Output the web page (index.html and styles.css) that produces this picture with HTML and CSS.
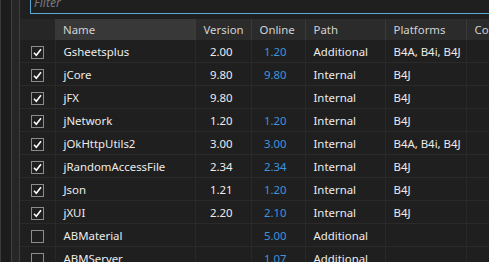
FILE: index.html
```html
<!DOCTYPE html>
<html lang="en">
<head>
    <meta charset="UTF-8">
    <title>Libraries Manager</title>
    <link rel="stylesheet" href="styles.css">
</head>
<body>
    <div class="app">
        <div class="side"></div>
        <div class="gutter"></div>
        <div class="main">
            <div class="filter">Filter</div>

            <!-- Liste des librairies -->
            <table class="libs">
                <colgroup>
                    <col class="c-check">
                    <col class="c-name">
                    <col class="c-version">
                    <col class="c-online">
                    <col class="c-path">
                    <col class="c-platforms">
                    <col class="c-comment">
                </colgroup>
                <thead>
                    <tr>
                        <th class="h-check"></th>
                        <th class="h-name">Name</th>
                        <th>Version</th>
                        <th>Online</th>
                        <th>Path</th>
                        <th>Platforms</th>
                        <th>Comment</th>
                    </tr>
                </thead>
                <tbody id="rows"></tbody>
            </table>
        </div>
    </div>

    <script>
        const libs = [
            ['Gsheetsplus', '2.00', '1.20', 'Additional', 'B4A, B4i, B4J', true],
            ['jCore', '9.80', '9.80', 'Internal', 'B4J', true],
            ['jFX', '9.80', '', 'Internal', 'B4J', true],
            ['jNetwork', '1.20', '1.20', 'Internal', 'B4J', true],
            ['jOkHttpUtils2', '3.00', '3.00', 'Internal', 'B4A, B4i, B4J', true],
            ['jRandomAccessFile', '2.34', '2.34', 'Internal', 'B4J', true],
            ['Json', '1.21', '1.20', 'Internal', 'B4J', true],
            ['jXUI', '2.20', '2.10', 'Internal', 'B4J', true],
            ['ABMaterial', '', '5.00', 'Additional', '', false],
            ['ABMServer', '', '1.07', 'Additional', '', false]
        ];

        const check = '<svg width="11" height="11" viewBox="0 0 11 11"><path d="M2 5.8 L4.3 8.2 L9 2.2" fill="none" stroke="#fff" stroke-width="1.6"/></svg>';

        document.getElementById('rows').innerHTML = libs.map(l => `
            <tr>
                <td class="cell-check"><span class="box">${l[5] ? check : ''}</span></td>
                <td>${l[0]}</td>
                <td class="num">${l[1]}</td>
                <td class="num online">${l[2]}</td>
                <td>${l[3]}</td>
                <td>${l[4]}</td>
                <td></td>
            </tr>`).join('');
    </script>
</body>
</html>
```

FILE: styles.css
```css
body { margin: 0; background: #1f1f1f; color: #ececec; font-family: "Noto Sans", "Open Sans", sans-serif; font-size: 11.4px; overflow: hidden; height: 262px; }
.app { display: flex; height: 262px; }
.side { width: 10px; border-left: 1px solid #3a3a3a; border-right: 1px solid #404040; background: #1c1c1c; }
.gutter { width: 7px; background: #262626; border-right: 1px solid #3e3e3e; }
.main { flex: 1; min-width: 0; background: #1f1f1f; }
.filter { height: 20px; margin: -8px 0 0 10px; border: 1px solid #5aa9d6; border-right: none; color: #7a7a7a; font-style: italic; font-size: 12px; line-height: 20px; padding-left: 3px; }
.libs { border-collapse: collapse; table-layout: fixed; width: 520px; margin-top: 5px; }
.c-check { width: 35px; }
.c-name { width: 140px; }
.c-version { width: 56px; }
.c-online { width: 54px; }
.c-path { width: 80px; }
.c-platforms { width: 81px; }
.c-comment { width: 74px; }
th { height: 21px; padding: 0 0 0 8px; background: #2b2b2b; color: #d2d2d2; font-weight: normal; text-align: left; border-left: 1px solid #3a3a3a; white-space: nowrap; overflow: hidden; }
th.h-check { background: #262626; border-left: none; }
th.h-name { background: #383838; border-left: none; }
td { height: 22px; padding: 0 0 0 8px; border-bottom: 1px solid #2a2a2a; border-left: 1px solid #282828; white-space: nowrap; overflow: hidden; }
td.num { text-align: right; padding: 0 18px 0 0; }
td.online { color: #3d95dc; }
td.cell-check { border-left: none; padding: 0; text-align: center; }
.box { display: inline-flex; align-items: center; justify-content: center; width: 11px; height: 11px; border: 1px solid #8c8c8c; vertical-align: middle; }
```
